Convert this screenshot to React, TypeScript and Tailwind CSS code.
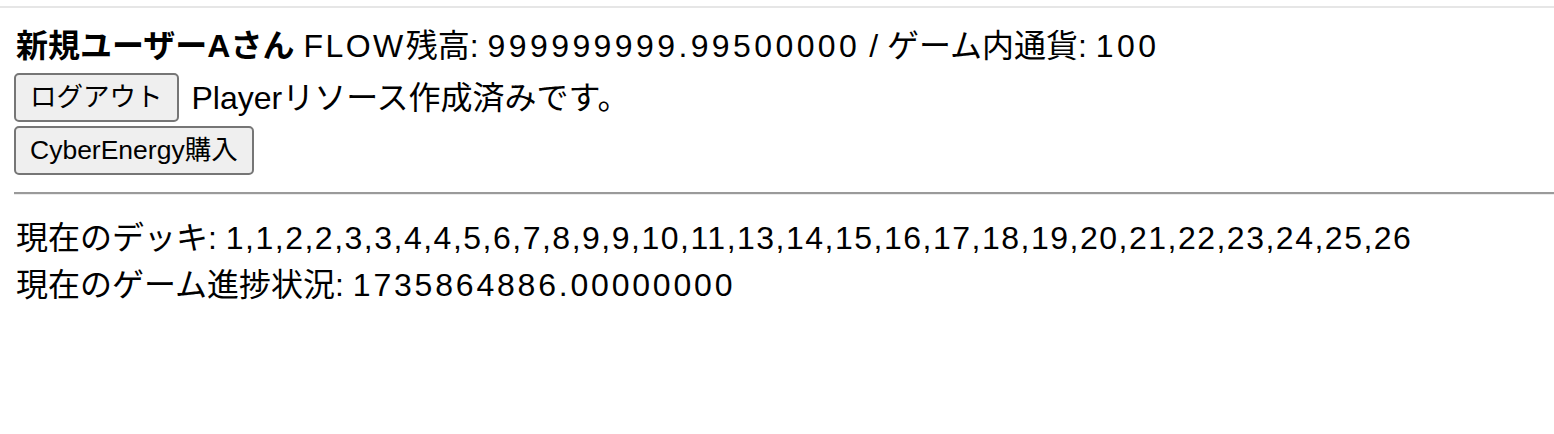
export default function App() {
  const deck = [1, 1, 2, 2, 3, 3, 4, 4, 5, 6, 7, 8, 9, 9, 10, 11, 13, 14, 15, 16, 17, 18, 19, 20, 21, 22, 23, 24, 25, 26];
  return (
    <div className="min-h-[434px] bg-white pt-[6px] text-black font-['Liberation_Sans','Noto_Sans_CJK_JP',sans-serif] text-[32px]">
      <div className="h-[2px] bg-[#e6e6e6]" />
      <div className="px-[16px] pt-[14px]">
        <div className="leading-[48px]">
          <b>新規ユーザーAさん</b> <span className="tracking-[2.5px]">FLOW</span>残高:{" "}
          <span className="tracking-[3.4px]">999999999.99500000</span> / ゲーム内通貨:{" "}
          <span className="tracking-[3.4px]">100</span>
        </div>
        <div className="mt-[3px] flex items-center gap-[13px] leading-[48px]">
          <button className="-ml-[2px] h-[49px] rounded-[5px] border-2 border-[#767676] bg-[#efefef] px-[14px] text-[26.5px] leading-none">
            ログアウト
          </button>
          <span>Playerリソース作成済みです。</span>
        </div>
        <div className="mt-[4px] flex">
          <button className="-ml-[2px] h-[49px] rounded-[5px] border-2 border-[#767676] bg-[#efefef] px-[14px] text-[26.5px] leading-none">
            CyberEnergy購入
          </button>
        </div>
        <div className="-ml-[2px] -mr-[16px] mt-[17px] border-t-2 border-[#9a9a9a] border-b border-b-[#ececec]" />
        <div className="mt-[20px] leading-[47px]">
          <div>
            現在のデッキ: <span className="tracking-[1.5px]">{deck.join(",")}</span>
          </div>
          <div>
            現在のゲーム進捗状況: <span className="tracking-[2.8px]">1735864886.00000000</span>
          </div>
        </div>
      </div>
    </div>
  );
}
